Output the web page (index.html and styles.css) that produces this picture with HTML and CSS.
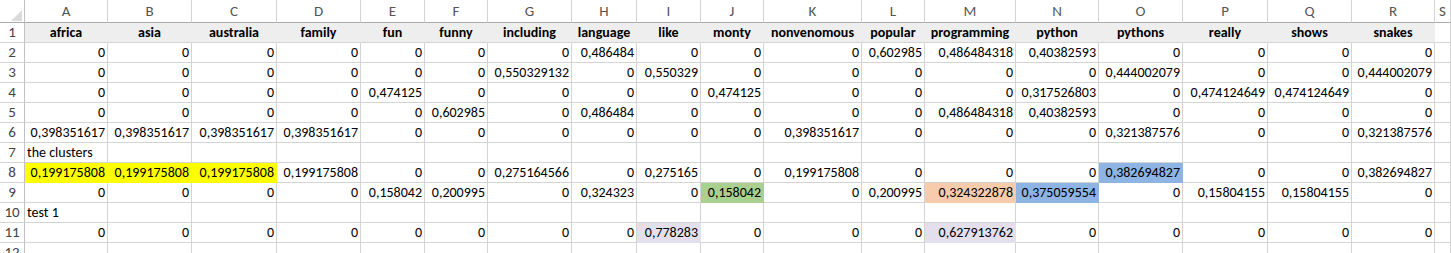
FILE: index.html
```html
<!DOCTYPE html>
<html>
<head>
<meta charset="utf-8">
<link rel="stylesheet" href="styles.css">
</head>
<body>
<div class="sheet">
  <div class="row colhead">
    <div class="corner"><svg width="24" height="22" viewBox="0 0 24 22"><polygon points="22,10 22,21 11,21" fill="#dadada"/></svg></div>
    <div>A</div><div>B</div><div>C</div><div>D</div><div>E</div><div>F</div><div>G</div><div>H</div><div>I</div><div>J</div><div>K</div><div>L</div><div>M</div><div>N</div><div>O</div><div>P</div><div>Q</div><div>R</div><div>S</div>
  </div>
  <div class="row titles">
    <div class="rh">1</div>
    <div class="h">africa</div><div class="h">asia</div><div class="h">australia</div><div class="h">family</div><div class="h">fun</div><div class="h">funny</div><div class="h">including</div><div class="h">language</div><div class="h">like</div><div class="h">monty</div><div class="h">nonvenomous</div><div class="h">popular</div><div class="h">programming</div><div class="h">python</div><div class="h">pythons</div><div class="h">really</div><div class="h">shows</div><div class="h">snakes</div><div></div>
  </div>
  <div class="row">
    <div class="rh">2</div>
    <div>0</div><div>0</div><div>0</div><div>0</div><div>0</div><div>0</div><div>0</div><div>0,486484</div><div>0</div><div>0</div><div>0</div><div>0,602985</div><div>0,486484318</div><div>0,40382593</div><div>0</div><div>0</div><div>0</div><div>0</div><div></div>
  </div>
  <div class="row">
    <div class="rh">3</div>
    <div>0</div><div>0</div><div>0</div><div>0</div><div>0</div><div>0</div><div>0,550329132</div><div>0</div><div>0,550329</div><div>0</div><div>0</div><div>0</div><div>0</div><div>0</div><div>0,444002079</div><div>0</div><div>0</div><div>0,444002079</div><div></div>
  </div>
  <div class="row">
    <div class="rh">4</div>
    <div>0</div><div>0</div><div>0</div><div>0</div><div>0,474125</div><div>0</div><div>0</div><div>0</div><div>0</div><div>0,474125</div><div>0</div><div>0</div><div>0</div><div>0,317526803</div><div>0</div><div>0,474124649</div><div>0,474124649</div><div>0</div><div></div>
  </div>
  <div class="row">
    <div class="rh">5</div>
    <div>0</div><div>0</div><div>0</div><div>0</div><div>0</div><div>0,602985</div><div>0</div><div>0,486484</div><div>0</div><div>0</div><div>0</div><div>0</div><div>0,486484318</div><div>0,40382593</div><div>0</div><div>0</div><div>0</div><div>0</div><div></div>
  </div>
  <div class="row">
    <div class="rh">6</div>
    <div>0,398351617</div><div>0,398351617</div><div>0,398351617</div><div>0,398351617</div><div>0</div><div>0</div><div>0</div><div>0</div><div>0</div><div>0</div><div>0,398351617</div><div>0</div><div>0</div><div>0</div><div>0,321387576</div><div>0</div><div>0</div><div>0,321387576</div><div></div>
  </div>
  <div class="row">
    <div class="rh">7</div>
    <div class="t">the clusters</div><div></div><div></div><div></div><div></div><div></div><div></div><div></div><div></div><div></div><div></div><div></div><div></div><div></div><div></div><div></div><div></div><div></div><div></div>
  </div>
  <div class="row">
    <div class="rh">8</div>
    <div class="yellow">0,199175808</div><div class="yellow">0,199175808</div><div class="yellow">0,199175808</div><div>0,199175808</div><div>0</div><div>0</div><div>0,275164566</div><div>0</div><div>0,275165</div><div>0</div><div>0,199175808</div><div>0</div><div>0</div><div>0</div><div class="blue">0,382694827</div><div>0</div><div>0</div><div>0,382694827</div><div></div>
  </div>
  <div class="row">
    <div class="rh">9</div>
    <div>0</div><div>0</div><div>0</div><div>0</div><div>0,158042</div><div>0,200995</div><div>0</div><div>0,324323</div><div>0</div><div class="green">0,158042</div><div>0</div><div>0,200995</div><div class="peach">0,324322878</div><div class="blue">0,375059554</div><div>0</div><div>0,15804155</div><div>0,15804155</div><div>0</div><div></div>
  </div>
  <div class="row">
    <div class="rh">10</div>
    <div class="t">test 1</div><div></div><div></div><div></div><div></div><div></div><div></div><div></div><div></div><div></div><div></div><div></div><div></div><div></div><div></div><div></div><div></div><div></div><div></div>
  </div>
  <div class="row">
    <div class="rh">11</div>
    <div>0</div><div>0</div><div>0</div><div>0</div><div>0</div><div>0</div><div>0</div><div>0</div><div class="lav">0,778283</div><div>0</div><div>0</div><div>0</div><div class="lav">0,627913762</div><div>0</div><div>0</div><div>0</div><div>0</div><div>0</div><div></div>
  </div>
  <div class="row">
    <div class="rh">12</div>
    <div></div><div></div><div></div><div></div><div></div><div></div><div></div><div></div><div></div><div></div><div></div><div></div><div></div><div></div><div></div><div></div><div></div><div></div><div></div>
  </div>
</div>
</body>
</html>
```

FILE: styles.css
```css
html, body {
  margin: 0;
  padding: 0;
  background: #ffffff;
}

.sheet {
  width: 1451px;
  height: 253px;
  overflow: hidden;
  font-family: "Carlito", "Lato", "Liberation Sans", sans-serif;
  font-size: 14px;
  color: #000000;
}

.row {
  display: grid;
  grid-template-columns: 25px 83px 84px 85px 84px 64px 63px 84px 65px 64px 63px 98px 63px 91px 83px 84px 85px 84px 83px 1fr;
  height: 20px;
}

.row > div {
  box-sizing: border-box;
  border-right: 1px solid #d4d4d4;
  border-bottom: 1px solid #d4d4d4;
  padding: 0 2px;
  line-height: 19px;
  white-space: nowrap;
  text-align: right;
}

.row > .rh {
  text-align: center;
  color: #444444;
  padding: 0;
  font-size: 15px;
  border-right-color: #c2c2c2;
}

.row > .t {
  text-align: left;
}

.colhead {
  height: 23px;
}

.colhead > div {
  text-align: center;
  color: #555555;
  font-size: 15px;
  line-height: 22px;
  border-bottom-color: #ababab;
  padding: 0;
}

.colhead > .corner {
  border-right-color: #c2c2c2;
  line-height: 0;
}

.corner svg {
  display: block;
}

.titles > .h {
  background: #eeeeee;
  border-right-color: #eeeeee;
  font-weight: bold;
  text-align: center;
  padding: 0;
}

.row > .yellow {
  background: #ffff00;
  border-right-color: #ffff00;
  border-bottom-color: #ffff00;
}

.row > .blue {
  background: #8db4e2;
  border-right-color: #8db4e2;
  border-bottom-color: #8db4e2;
}

.row > .green {
  background: #a9d08e;
  border-right-color: #a9d08e;
  border-bottom-color: #a9d08e;
}

.row > .peach {
  background: #f8cbad;
  border-right-color: #f8cbad;
  border-bottom-color: #f8cbad;
}

.row > .lav {
  background: #e4dfec;
  border-right-color: #e4dfec;
  border-bottom-color: #e4dfec;
}
```
